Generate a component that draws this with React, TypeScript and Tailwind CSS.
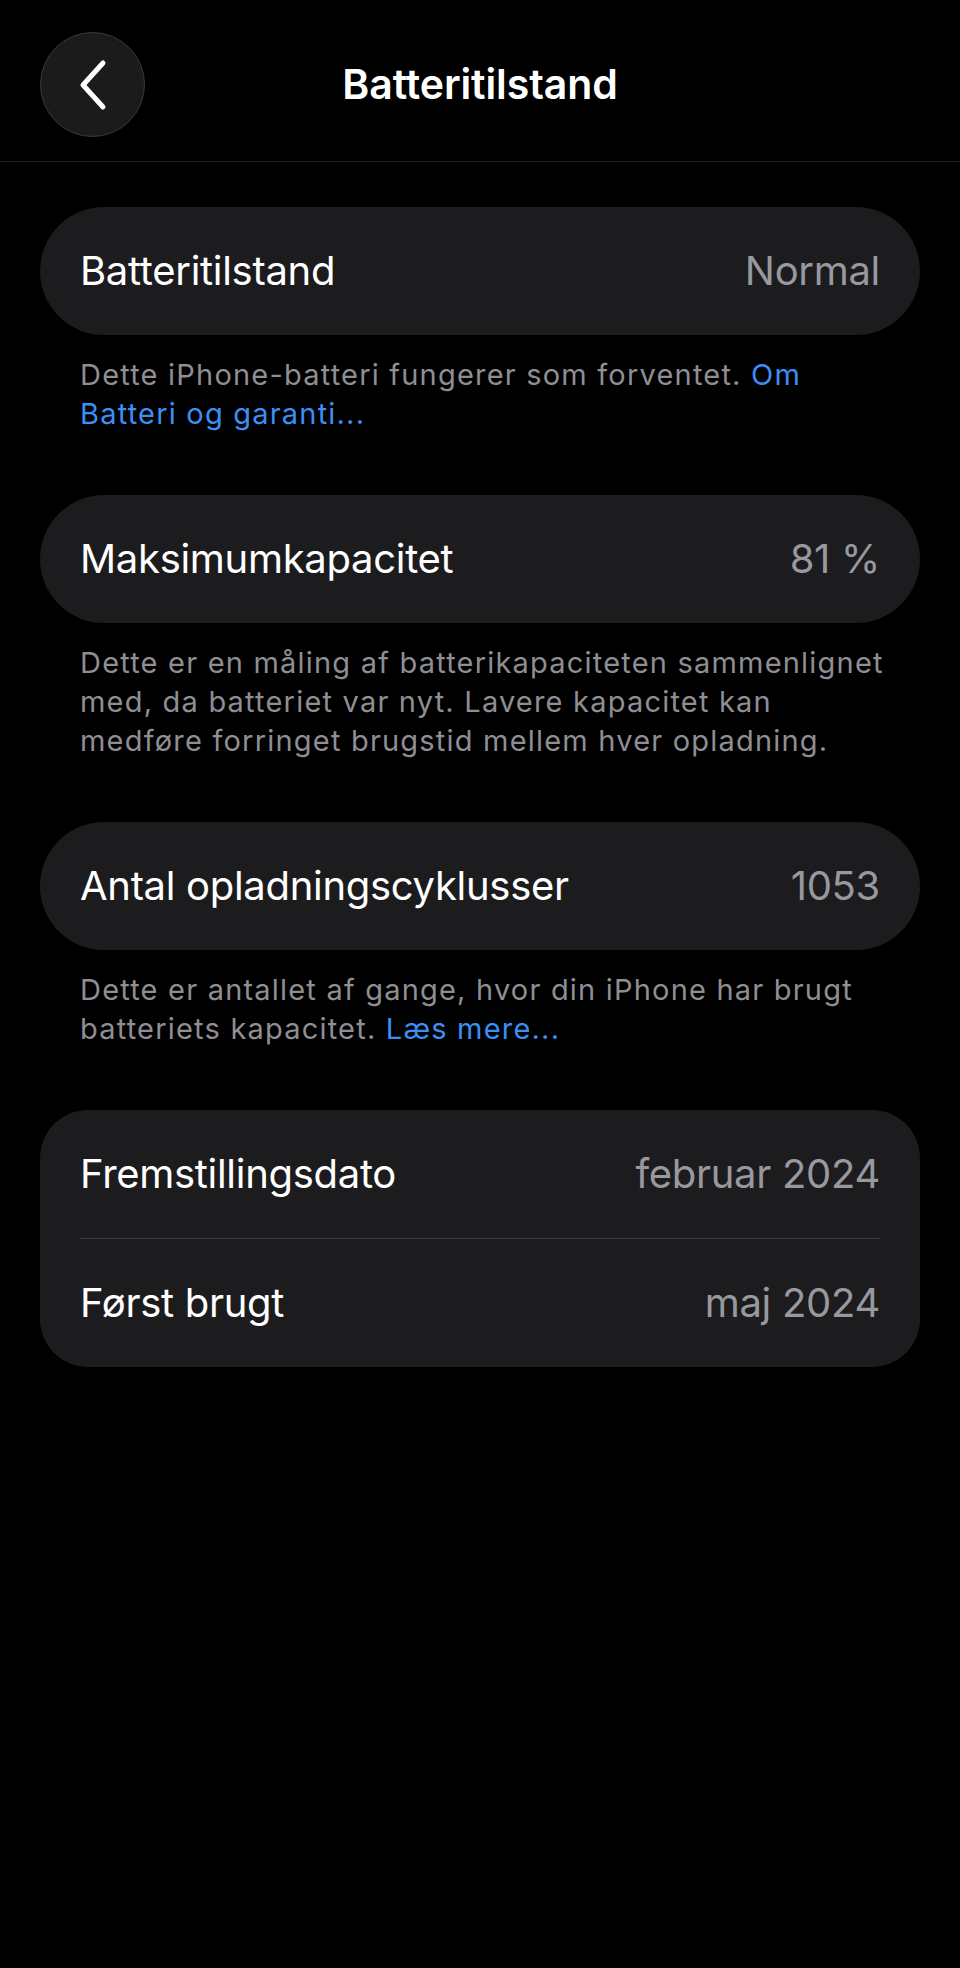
const Row = ({ label, value }: { label: string; value: string }) => (
  <div className="flex items-center justify-between h-[128px] px-10">
    <span className="text-white">{label}</span>
    <span className="text-[#98989f]">{value}</span>
  </div>
);

const note = "pl-10 pr-4 pt-[20px] pb-[62px] text-[29px] leading-[39px] tracking-[1.2px] whitespace-nowrap text-[#8e8e93]";

const App = () => {
  return (
    <div
      className="min-h-[1968px] bg-black text-[40px] tracking-[-0.3px]"
      style={{ fontFamily: "Inter, 'Noto Sans', sans-serif" }}
    >
      {/* header */}
      <div className="relative flex items-center justify-center h-[162px] border-b border-[#1f1f21]">
        <button className="absolute left-10 top-[32px] w-[105px] h-[105px] rounded-full bg-[#1b1b1c] border border-[#3a3a3c] flex items-center justify-center">
          <svg width="32" height="52" viewBox="0 0 32 52" fill="none">
            <path
              d="M26 4 L6 26 L26 48"
              stroke="white"
              strokeWidth="5"
              strokeLinecap="round"
              strokeLinejoin="round"
            />
          </svg>
        </button>
        <h1 className="pt-[8px] text-[41px] tracking-[-0.1px] font-semibold text-white">Batteritilstand</h1>
      </div>

      <div className="px-10 pt-[45px]">
        <div className="rounded-full bg-[#1c1c1e]">
          <Row label="Batteritilstand" value="Normal" />
        </div>
        <p className={note}>
          Dette iPhone-batteri fungerer som forventet.{" "}
          <span className="text-[#3b8ff5]">
            Om
            <br />
            Batteri og garanti...
          </span>
        </p>

        <div className="rounded-full bg-[#1c1c1e]">
          <Row label="Maksimumkapacitet" value="81 %" />
        </div>
        <p className={note}>
          Dette er en måling af batterikapaciteten sammenlignet
          <br />
          med, da batteriet var nyt. Lavere kapacitet kan
          <br />
          medføre forringet brugstid mellem hver opladning.
        </p>

        <div className="rounded-full bg-[#1c1c1e]">
          <Row label="Antal opladningscyklusser" value="1053" />
        </div>
        <p className={note}>
          Dette er antallet af gange, hvor din iPhone har brugt
          <br />
          batteriets kapacitet. <span className="text-[#3b8ff5]">Læs mere...</span>
        </p>

        <div className="rounded-[48px] bg-[#1c1c1e]">
          <Row label="Fremstillingsdato" value="februar 2024" />
          <div className="mx-10 h-px bg-[#3a3a3d]" />
          <Row label="Først brugt" value="maj 2024" />
        </div>
      </div>
    </div>
  );
};

export default App;
